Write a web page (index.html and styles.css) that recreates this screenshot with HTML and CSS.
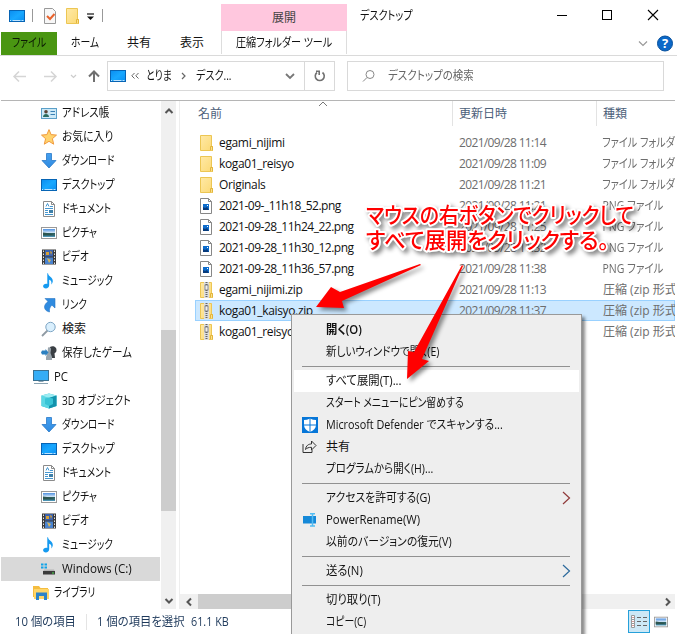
FILE: index.html
```html
<!DOCTYPE html>
<html lang="ja">
<head>
    <meta charset="UTF-8">
    <meta name="viewport" content="width=device-width, initial-scale=1.0">
    <title>デスクトップ</title>
    <link rel="stylesheet" href="styles.css">
</head>
<body>
    <svg class="defs" width="0" height="0">
        <linearGradient id="g-desk" x1="0" y1="0" x2="1" y2="1"><stop offset="0" stop-color="#0a8df0"/><stop offset="0.5" stop-color="#18a8ff"/><stop offset="1" stop-color="#0a8ff2"/></linearGradient>
        <linearGradient id="g-folder" x1="0" y1="0" x2="1" y2="1"><stop offset="0" stop-color="#ffe9a6"/><stop offset="1" stop-color="#fbd975"/></linearGradient>
        <linearGradient id="g-pic" x1="0" y1="0" x2="0" y2="1"><stop offset="0" stop-color="#4d8fe0"/><stop offset="0.5" stop-color="#dcecf8"/><stop offset="0.55" stop-color="#2d5f5c"/><stop offset="1" stop-color="#4f9bc0"/></linearGradient>
        <linearGradient id="g-blue" x1="0" y1="0" x2="0" y2="1"><stop offset="0" stop-color="#45a0f0"/><stop offset="1" stop-color="#2f8ae0"/></linearGradient>
        <symbol id="i-desktop" viewBox="0 0 16 16"><rect x="0.5" y="2.5" width="15" height="11" fill="url(#g-desk)" stroke="#0764b4"/><path d="M1 12.5h1M3.500 12.500h8M12.500 12.500h2" stroke="#bfe4ff"/></symbol>
        <symbol id="i-folder" viewBox="0 0 16 16"><path d="M1.500 0.500h11v11h1v4h-12z" fill="url(#g-folder)" stroke="#ecc653"/><path d="M11.500 15v-3.500h2v4" fill="#fbe08c" stroke="#e2b53c"/></symbol>
        <symbol id="i-contact" viewBox="0 0 16 16"><rect x="0.5" y="3.500" width="15" height="10" fill="#cde9f7" stroke="#5b9fc8"/><circle cx="5" cy="6.700" r="1.800" fill="#5c4434"/><path d="M2 12c0-4 6-4 6 0z" fill="#2c6c5e"/><path d="M9.500 6.500h4.500M9.500 9.500h4.500" stroke="#3a80b5"/></symbol>
        <symbol id="i-star" viewBox="0 0 16 16"><path d="M8 .6l2.100 5 5.400.5-4.100 3.600 1.300 5.500L8 12.300l-4.700 2.900 1.300-5.500L.5 6.100l5.400-.5z" fill="#ffd36e" stroke="#f09a3e"/></symbol>
        <symbol id="i-down" viewBox="0 0 16 16"><path d="M5.500.5h5v7h4.500L8 15 1 7.500h4.500z" fill="url(#g-blue)" stroke="#2878c8" stroke-width=".8"/></symbol>
        <symbol id="i-doc" viewBox="0 0 16 16"><path d="M2.500.5h8l3 3v12h-11z" fill="#fff" stroke="#8b8b8b"/><path d="M10.500.5v3h3" fill="none" stroke="#8b8b8b"/><path d="M5 5.500l1.500-3L8 5.500M4 7.500h8M4 9.500h3M4 11.500h3M4 13.500h8M9 5.500h3" fill="none" stroke="#4596cf"/><rect x="8" y="9" width="4" height="3" fill="#3e7fa8"/></symbol>
        <symbol id="i-pic" viewBox="0 0 16 16"><rect x="0.5" y="2.500" width="15" height="11" fill="#fff" stroke="#999"/><rect x="2" y="4" width="12" height="8" fill="url(#g-pic)"/><path d="M2 7.500l4 .5 8 2v.5H2z" fill="#2d5550"/></symbol>
        <symbol id="i-video" viewBox="0 0 16 16"><rect x="1" y="0.500" width="14" height="15" fill="#3b3b3b"/><rect x="4" y="1" width="8" height="6.500" fill="#3b62ad"/><rect x="4" y="8.500" width="8" height="6.500" fill="#4a83cf"/><path d="M5 3h3v3H5zM9 2l2 1-1 3" fill="#d6a138"/><path d="M6 9l4 2-2 3" fill="#d8b657"/><path d="M2.500 1.500v14M13.500 1.500v14" stroke="#e5e5e5" stroke-dasharray="1.500 1.500"/></symbol>
        <symbol id="i-music" viewBox="0 0 16 16"><path d="M7 .3c.5 3.500 5 3.800 4.800 8-.1 1.600-1 2.700-1.600 3.300.9-2.900-.5-4.200-2-4.800v5.500c0 2-1.600 3.100-3.400 3.100-1.600 0-2.700-.9-2.700-2.100 0-1.700 2-2.900 4.200-2.300V.3z" fill="#159af0"/></symbol>
        <symbol id="i-link" viewBox="0 0 16 16"><path d="M4 1.500h10v9.500l-3-2.800C9 9.800 8 12 8.500 15c-3-.5-5-2.500-5-5 0-2 1.500-4 3.500-5.500z" fill="#2f8be0" stroke="#2675c4" stroke-width=".6"/></symbol>
        <symbol id="i-find" viewBox="0 0 16 16"><path d="M1 15l5.500-5.500" stroke="#8f9aa3" stroke-width="1.800"/><circle cx="9.500" cy="6" r="4.700" fill="#d9effd" stroke="#7da5c4"/></symbol>
        <symbol id="i-game" viewBox="0 0 16 16"><path d="M9 2c3-2 7 0 6.500 3.500-.2 2-1.500 2.500-2 3L14 13H8z" fill="#3a3f44"/><path d="M7 2.500a2 2 0 0 1 3 2L9.500 8l1.500 4v3H5v-3l1.500-4z" fill="#9aa5ad"/><path d="M1 5.500h3.500V4l3 3.500-3 3.500V9.500H1L0 7.500z" fill="#2c80c0"/></symbol>
        <symbol id="i-pc" viewBox="0 0 16 16"><rect x="0.5" y="1.500" width="15" height="10" fill="#35adf5" stroke="#3a7090"/><path d="M5.500 12.500h5M1 14.500h14" stroke="#8aa3b2"/></symbol>
        <symbol id="i-3d" viewBox="0 0 16 16"><path d="M8 .5l7.500 2v10.500L8 15.500.5 13V2.500z" fill="#2bb9cf"/><path d="M.5 2.500L8 5v10.500L.5 13z" fill="#5bd7e4"/><path d="M.5 2.500L8 .5l7.500 2L8 5z" fill="#9cecf2"/><path d="M8 5l7.500-2.500V13L8 15.500z" fill="#1392ac"/><path d="M4 5.500l4-1 4 1v5.500l-4 2-4-2z" fill="#38c4d6"/></symbol>
        <symbol id="i-drive" viewBox="0 0 16 16"><path d="M0 2.500h2.500v2H0zM3.500 2.500H6v2H3.500zM0 5.500h2.500v2H0zM3.500 5.500H6v2H3.500z" fill="#12a3e8"/><path d="M3 8.500h10l1 2H2z" fill="#b5b5b5"/><rect x="2" y="10" width="12" height="3.500" fill="#3b3b3b"/><path d="M11 12h2" stroke="#4ae04a"/></symbol>
        <symbol id="i-lib" viewBox="0 0 16 16"><path d="M0 1h6l1.500 2H15v9H0z" fill="#f5bd3f"/><path d="M1 4h15v10H1z" fill="#ffd669"/><path d="M3 7.500h11V15h-3v-4H6v4H3z" fill="#2c83c9"/></symbol>
        <symbol id="i-png" viewBox="0 0 16 16"><path d="M1.500.5h8l3 3v12h-11z" fill="#fff" stroke="#878787"/><path d="M9.500.5v3h3" fill="none" stroke="#878787"/><rect x="4" y="6" width="6" height="6" fill="#0d6ccc"/><path d="M4 12V9l2 1 2-1 2 3z" fill="#083b7c"/><path d="M8 7h1v1H8z" fill="#fff"/></symbol>
        <symbol id="i-zip" viewBox="0 0 16 16"><path d="M1.500.5h11v11h1v4h-12z" fill="url(#g-folder)" stroke="#ecc653"/><path d="M11.500 15v-3.500h2v4" fill="#fbe08c" stroke="#e2b53c"/><rect x="5" y="0" width="5" height="16" fill="#dedede"/><path d="M7.500 0v16" stroke="#666" stroke-width="2" stroke-dasharray="1 1"/><rect x="6" y="3" width="3" height="5" fill="#eee" stroke="#666" stroke-width=".7"/></symbol>
        <symbol id="i-shield" viewBox="0 0 16 16"><path d="M0 0h16v16H0z" fill="#0676d8"/><path d="M8 1.500c2 1 4 1.500 6 1.500v5c0 3.200-2.500 5.500-6 7C4.500 13.500 2 11.200 2 8V3c2 0 4-.5 6-1.500z" fill="#fff"/><path d="M8 1v14M1.500 8h13" stroke="#0676d8"/></symbol>
        <symbol id="i-share" viewBox="0 0 16 16"><path d="M2.500 5v8.500h9V11" fill="none" stroke="#333" transform="translate(-1.500)"/><path d="M3.500 10.500c.5-4 3-5.500 6-5.500V2L14 6.500 9.500 11V8.300c-3 0-4.500.7-6 2.200z" fill="none" stroke="#333"/></symbol>
        <symbol id="i-rename" viewBox="0 0 16 16"><path d="M1 4h13v7.500H1z" fill="#1689d8"/><path d="M10.500 2v12M8 1.800h5M8 14h5" stroke="#53bdf2" stroke-width="1.500"/></symbol>
    </svg>

    <div class="window">
        <div class="ribbon">
            <div class="quick">
                <svg class="icon"><use href="#i-desktop"/></svg>
                <i class="bar"></i>
                <svg class="icon check" viewBox="0 0 16 16"><path d="M2.500.5h8l3 3v12h-11z" fill="#f7f7f7" stroke="#999"/><path d="M5 8l3 3 4.500-5" fill="none" stroke="#e8622c" stroke-width="2"/></svg>
                <svg class="icon qfolder"><use href="#i-folder"/></svg>
                <svg class="caret" width="8" height="8" viewBox="0 0 8 8"><path d="M0 1h7" stroke="#111" stroke-width="1.200"/><path d="M0 3.500h7L3.500 7z" fill="#111"/></svg>
                <i class="bar bar-end"></i>
            </div>
            <div class="tabs">
                <span class="tab file"><span class="t s82">ファイル</span></span>
                <span class="tab home"><span class="t s82">ホーム</span></span>
                <span class="tab share"><span class="t">共有</span></span>
                <span class="tab view"><span class="t">表示</span></span>
            </div>
            <div class="context">
                <div class="context-head">展開</div>
                <div class="context-tab"><span class="t s84">圧縮フォルダー ツール</span></div>
            </div>
            <div class="caption">
                <span class="t s84 caption-text">デスクトップ</span>
                <svg class="wbtns" width="104" height="14" viewBox="0 0 104 14"><path d="M1 7.500h10" stroke="#000"/><rect x="46.500" y="2.500" width="9" height="9" fill="none" stroke="#000"/><path d="M92 2l10 10M102 2L92 12" stroke="#000" stroke-width="1.100"/></svg>
                <svg class="help" width="36" height="17" viewBox="0 0 36 17"><path d="M2 6.500l4 4 4-4" fill="none" stroke="#999" stroke-width="1.200"/><circle cx="28" cy="8.500" r="7.500" fill="#0b68c8" stroke="#07509c"/><text x="28" y="13" class="q">?</text></svg>
            </div>
        </div>

        <div class="nav">
            <svg class="arrows" width="104" height="30" viewBox="0 0 104 30" fill="none"><path d="M14 15.500h12M19 10.500l-5 5 5 5M44 15.500h12M51 10.500l5 5-5 5" stroke="#d5d5d5" stroke-width="1.500"/><path d="M71 14l2.500 2.500L76 14" stroke="#ccc" stroke-width="1.200"/><path d="M94 21V11M89 15.500l5-5 5 5" stroke="#707070" stroke-width="2"/></svg>
            <div class="address">
                <svg class="icon"><use href="#i-desktop"/></svg>
                <svg class="laquo" width="8" height="8" viewBox="0 0 8 8" fill="none" stroke="#666"><path d="M3.500 1L.8 3.800l2.700 2.700M7.500 1L4.800 3.800l2.700 2.700"/></svg>
                <span class="t s82 crumb1">とりま</span>
                <svg class="raquo" width="6" height="8" viewBox="0 0 6 8" fill="none" stroke="#666" stroke-width="1.200"><path d="M1 1l3 3-3 3"/></svg>
                <span class="t s84 crumb2">デスク...</span>
                <svg class="drop" width="10" height="8" viewBox="0 0 10 8" fill="none" stroke="#777" stroke-width="1.800"><path d="M1 2l4 4 4-4"/></svg>
                <span class="reload"><svg width="14" height="14" viewBox="0 0 14 14" fill="none" stroke="#707070" stroke-width="1.600"><path d="M9.500 3.500A4.500 4.500 0 1 1 4 3.500M3 2.200h3.200V6"/></svg></span>
            </div>
            <div class="search">
                <svg width="14" height="14" viewBox="0 0 14 14" fill="none" stroke="#888"><circle cx="8" cy="5.500" r="4"/><path d="M5 8.500L1 12.500"/></svg>
                <span class="t s87">デスクトップの検索</span>
            </div>
        </div>

        <div class="main">
            <div class="tree">
                <div class="node"><svg class="icon"><use href="#i-contact"/></svg><span class="t s87">アドレス帳</span></div>
                <div class="node"><svg class="icon"><use href="#i-star"/></svg><span class="t s90">お気に入り</span></div>
                <div class="node"><svg class="icon"><use href="#i-down"/></svg><span class="t s80">ダウンロード</span></div>
                <div class="node"><svg class="icon"><use href="#i-desktop"/></svg><span class="t s84">デスクトップ</span></div>
                <div class="node"><svg class="icon"><use href="#i-doc"/></svg><span class="t s80">ドキュメント</span></div>
                <div class="node"><svg class="icon"><use href="#i-pic"/></svg><span class="t s82">ピクチャ</span></div>
                <div class="node"><svg class="icon"><use href="#i-video"/></svg><span class="t s80">ビデオ</span></div>
                <div class="node"><svg class="icon"><use href="#i-music"/></svg><span class="t s80">ミュージック</span></div>
                <div class="node"><svg class="icon"><use href="#i-link"/></svg><span class="t s80">リンク</span></div>
                <div class="node"><svg class="icon"><use href="#i-find"/></svg><span class="t">検索</span></div>
                <div class="node"><svg class="icon"><use href="#i-game"/></svg><span class="t s87">保存したゲーム</span></div>
                <div class="node root"><svg class="icon"><use href="#i-pc"/></svg><span class="t s94">PC</span></div>
                <div class="node"><svg class="icon"><use href="#i-3d"/></svg><span class="t s84">3D オブジェクト</span></div>
                <div class="node"><svg class="icon"><use href="#i-down"/></svg><span class="t s80">ダウンロード</span></div>
                <div class="node"><svg class="icon"><use href="#i-desktop"/></svg><span class="t s84">デスクトップ</span></div>
                <div class="node"><svg class="icon"><use href="#i-doc"/></svg><span class="t s80">ドキュメント</span></div>
                <div class="node"><svg class="icon"><use href="#i-pic"/></svg><span class="t s82">ピクチャ</span></div>
                <div class="node"><svg class="icon"><use href="#i-video"/></svg><span class="t s80">ビデオ</span></div>
                <div class="node"><svg class="icon"><use href="#i-music"/></svg><span class="t s80">ミュージック</span></div>
                <div class="node current"><svg class="icon"><use href="#i-drive"/></svg><span class="t s97">Windows (C:)</span></div>
                <div class="node root"><svg class="icon"><use href="#i-lib"/></svg><span class="t s80">ライブラリ</span></div>
            </div>
            <div class="vscroll">
                <svg width="10" height="8" viewBox="0 0 10 8" fill="none" stroke="#555" stroke-width="2"><path d="M1.500 6L5 2.500 8.500 6"/></svg>
                <div class="vthumb"></div>
                <svg width="10" height="8" viewBox="0 0 10 8" fill="none" stroke="#555" stroke-width="2"><path d="M1.500 2L5 5.500 8.500 2"/></svg>
            </div>
            <div class="list">
                <div class="head">
                    <span class="h-name">名前</span>
                    <svg class="sort" width="10" height="6" viewBox="0 0 10 6" fill="none" stroke="#777"><path d="M1 5l4-4 4 4"/></svg>
                    <span class="h-date">更新日時</span>
                    <span class="h-type">種類</span>
                </div>
                <div class="rows">
                    <div class="row"><svg class="icon"><use href="#i-folder"/></svg><span class="name">egami_nijimi</span><span class="date">2021/09/28 11:14</span><span class="t type s84">ファイル フォルダー</span></div>
                    <div class="row"><svg class="icon"><use href="#i-folder"/></svg><span class="name">koga01_reisyo</span><span class="date">2021/09/28 11:09</span><span class="t type s84">ファイル フォルダー</span></div>
                    <div class="row"><svg class="icon"><use href="#i-folder"/></svg><span class="name">Originals</span><span class="date">2021/09/28 11:21</span><span class="t type s84">ファイル フォルダー</span></div>
                    <div class="row"><svg class="icon"><use href="#i-png"/></svg><span class="name shot">2021-09-_11h18_52.png</span><span class="date">2021/09/28 11:21</span><span class="t type s87">PNG ファイル</span></div>
                    <div class="row"><svg class="icon"><use href="#i-png"/></svg><span class="name shot">2021-09-28_11h24_22.png</span><span class="date">2021/09/28 11:25</span><span class="t type s87">PNG ファイル</span></div>
                    <div class="row"><svg class="icon"><use href="#i-png"/></svg><span class="name shot">2021-09-28_11h30_12.png</span><span class="date">2021/09/28 11:32</span><span class="t type s87">PNG ファイル</span></div>
                    <div class="row"><svg class="icon"><use href="#i-png"/></svg><span class="name shot">2021-09-28_11h36_57.png</span><span class="date">2021/09/28 11:38</span><span class="t type s87">PNG ファイル</span></div>
                    <div class="row"><svg class="icon"><use href="#i-zip"/></svg><span class="name">egami_nijimi.zip</span><span class="date">2021/09/28 11:13</span><span class="t type">圧縮 (zip 形式)</span></div>
                    <div class="row selected"><svg class="icon"><use href="#i-zip"/></svg><span class="name">koga01_kaisyo.zip</span><span class="date">2021/09/28 11:37</span><span class="t type">圧縮 (zip 形式)</span></div>
                    <div class="row"><svg class="icon"><use href="#i-zip"/></svg><span class="name">koga01_reisyo.zip</span><span class="date">2021/09/28 11:38</span><span class="t type">圧縮 (zip 形式)</span></div>
                </div>
                <div class="hscroll">
                    <svg width="8" height="10" viewBox="0 0 8 10" fill="none" stroke="#555" stroke-width="2"><path d="M6 1.500L2.500 5 6 8.500"/></svg>
                    <div class="hthumb"></div>
                    <svg width="8" height="10" viewBox="0 0 8 10" fill="none" stroke="#555" stroke-width="2"><path d="M2 1.500L5.500 5 2 8.500"/></svg>
                </div>
            </div>
        </div>

        <div class="status">
            <span class="count"><span class="t s94">10 個の項目</span></span>
            <span class="picked"><span class="t s94">1 個の項目を選択</span></span>
            <span class="t s90">61.1 KB</span>
            <span class="views">
                <span class="view-on"><svg width="16" height="14" viewBox="0 0 16 14" fill="none"><path d="M.5.500h3v4h-3zM.5 4.500h3v4h-3zM.5 8.500h3v4h-3z" fill="#fff" stroke="#999"/><path d="M2 2v1M2 6v1M2 10v1" stroke="#a33"/><path d="M6 2.500h10M6 6.500h10M6 10.500h10" stroke="#666" stroke-dasharray="4 2"/></svg></span>
                <svg class="icon small"><use href="#i-pic"/></svg>
            </span>
        </div>
    </div>

    <div class="menu">
        <div class="item bold"><span class="t s94">開く(O)</span></div>
        <div class="item"><span class="t s87">新しいウィンドウで開く(E)</span></div>
        <hr>
        <div class="item hover"><span class="t s94">すべて展開(T)...</span></div>
        <div class="item"><span class="t s82">スタート メニューにピン留めする</span></div>
        <div class="item"><svg class="icon"><use href="#i-shield"/></svg><span class="t s90">Microsoft Defender でスキャンする...</span></div>
        <div class="item"><svg class="icon"><use href="#i-share"/></svg><span class="t">共有</span></div>
        <div class="item"><span class="t s87">プログラムから開く(H)...</span></div>
        <hr>
        <div class="item"><span class="t s90">アクセスを許可する(G)</span><svg class="sub" width="9" height="14" viewBox="0 0 9 14"><path d="M1 1l6.500 6L1 13" fill="none" stroke="#903a3a" stroke-width="1.200"/></svg></div>
        <div class="item"><svg class="icon"><use href="#i-rename"/></svg><span class="t s94">PowerRename(W)</span></div>
        <div class="item"><span class="t s90">以前のバージョンの復元(V)</span></div>
        <hr>
        <div class="item"><span class="t s94">送る(N)</span><svg class="sub" width="9" height="14" viewBox="0 0 9 14"><path d="M1 1l6.500 6L1 13" fill="none" stroke="#2d6a9c" stroke-width="1.200"/></svg></div>
        <hr>
        <div class="item"><span class="t s94">切り取り(T)</span></div>
        <div class="item"><span class="t s82">コピー(C)</span></div>
    </div>

    <svg class="callout" width="677" height="634" viewBox="0 0 677 634">
        <text x="366" y="223" textLength="268" lengthAdjust="spacingAndGlyphs">マウスの右ボタンでクリックして</text>
        <text x="366" y="248" textLength="243" lengthAdjust="spacingAndGlyphs">すべて展開をクリックする。</text>
        <path d="M420 264L340 292L331 287L316 307L344 308L342 301L421 265z"/>
        <path d="M462 265L414 352L408 351L407 379L429 361L422 359L463 266z"/>
    </svg>
</body>
</html>
```
FILE: styles.css
```css
* {
    box-sizing: border-box;
}
body {
    margin: 0;
    width: 677px;
    height: 634px;
    overflow: hidden;
    background: #fff;
    color: #111;
    font-family: "Open Sans", "Noto Sans CJK JP", sans-serif;
    font-size: 12px;
    line-height: 16px;
}
.defs {
    position: absolute;
}
svg {
    flex: none;
    display: block;
}
.icon {
    width: 16px;
    height: 16px;
}

/* condensed labels */
.t {
    display: inline-block;
    white-space: nowrap;
    transform-origin: 0 50%;
    font-feature-settings: "palt";
}
.s80 {
    transform: scaleX(.8);
}
.s82 {
    transform: scaleX(.82);
}
.s84 {
    transform: scaleX(.84);
}
.s87 {
    transform: scaleX(.875);
}
.s90 {
    transform: scaleX(.9);
}
.s94 {
    transform: scaleX(.945);
}
.s97 {
    transform: scaleX(.97);
}
.window {
    display: flex;
    flex-direction: column;
    height: 634px;
}

/* ribbon */
.ribbon {
    display: grid;
    grid-template-columns: 221px 126px 1fr;
    grid-template-rows: 31px 24px;
    height: 56px;
    border-bottom: 1px solid #dadada;
}
.quick {
    display: flex;
    align-items: center;
    padding-left: 9px;
}
.bar {
    width: 1px;
    height: 13px;
    margin-left: 7px;
    background: #999;
}
.check {
    margin-left: 9px;
}
.qfolder {
    margin-left: 7px;
}
.caret {
    margin: 3px 0 0 6px;
}
.tabs {
    grid-row: 2;
    display: flex;
    align-items: center;
}
.tab {
    display: flex;
    align-items: center;
    height: 23px;
}
.file {
    width: 56px;
    margin-left: 1px;
    padding-left: 11px;
    background: #4a9612;
    color: #0b1a04;
}
.home {
    width: 70px;
    padding-left: 14px;
}
.share {
    width: 53px;
}
.context {
    grid-column: 2;
    grid-row: 1 / 3;
}
.context-head {
    height: 27px;
    margin-top: 4px;
    padding-top: 6px;
    background: #ffc7de;
    color: #444;
    text-align: center;
}
.context-tab {
    height: 23px;
    padding: 4px 0 0 14px;
    border-left: 1px solid #ddd;
    border-right: 1px solid #ddd;
}
.caption {
    grid-row: 1 / 3;
    grid-column: 3;
    display: grid;
    grid-template-columns: 1fr 104px 17px;
    grid-template-rows: 31px 24px;
    align-items: center;
    padding-left: 13px;
}
.wbtns {
    margin-bottom: 1px;
}
.help {
    grid-row: 2;
    grid-column: 2 / 4;
    justify-self: end;
    margin-right: 4px;
}
.q {
    fill: #fff;
    font-size: 13px;
    font-weight: 700;
    text-anchor: middle;
}

/* address row */
.nav {
    display: flex;
    align-items: center;
    height: 40px;
}
.address {
    display: flex;
    align-items: center;
    width: 228px;
    height: 30px;
    margin-left: 3px;
    padding-left: 2px;
    border: 1px solid #d9d9d9;
}
.laquo {
    margin-left: 5px;
}
.crumb1 {
    width: 28px;
    margin-left: 7px;
}
.raquo {
    margin-left: 7px;
}
.crumb2 {
    width: 38px;
    margin-left: 9px;
}
.drop {
    margin-left: auto;
}
.reload {
    display: flex;
    align-items: center;
    justify-content: center;
    width: 30px;
    height: 28px;
    margin-left: 9px;
    border-left: 1px solid #d9d9d9;
}
.search {
    display: flex;
    align-items: center;
    gap: 12px;
    width: 317px;
    height: 30px;
    margin-left: 12px;
    padding-left: 14px;
    border: 1px solid #d9d9d9;
    color: #666;
}

/* panes */
.main {
    display: flex;
    height: 509px;
    margin: 4px 2px 0 1px;
    border-top: 1px solid #b5b5b5;
}
.tree {
    width: 160px;
    overflow: hidden;
}
.node {
    display: flex;
    align-items: center;
    gap: 5px;
    height: 24px;
    padding-left: 40px;
}
.node.root {
    padding-left: 32px;
}
.node.current {
    margin-right: 1px;
    background: #d9d9d9;
}
.vscroll {
    display: flex;
    flex-direction: column;
    align-items: center;
    width: 15px;
    padding: 6px 0 4px;
    background: #f0f0f0;
}
.vthumb {
    width: 15px;
    height: 181px;
    margin: 215px 0 auto;
    background: #cdcdcd;
}
.list {
    display: flex;
    flex-direction: column;
    flex: 1;
    min-width: 0;
    margin-left: 3px;
    border-left: 1px solid #eee;
    overflow: hidden;
}
.head {
    display: grid;
    grid-template-columns: 121px 133px 144px 1fr;
    height: 25px;
    padding-left: 18px;
    color: #4c607a;
}
.head span {
    padding-top: 5px;
}
.h-date,
.h-type {
    padding-left: 6px;
    border-left: 1px solid #e3e3e3;
}
.sort {
    margin-left: -1px;
}
.rows {
    flex: 1;
    margin-top: 6px;
}
.row {
    display: grid;
    grid-template-columns: 16px 240px 144px 1fr;
    align-items: center;
    height: 21px;
    margin-left: 15px;
    padding-left: 4px;
}
.row.selected {
    background: #cce8ff;
    box-shadow: inset 0 0 0 1px #99d1ff;
}
.name {
    padding-left: 4px;
    letter-spacing: -.35px;
}
.name.shot {
    letter-spacing: -.5px;
}
.date,
.type {
    color: #6d6d6d;
}
.date {
    padding-left: 4px;
    letter-spacing: -.65px;
}
.type {
    padding-left: 4px;
}
.hscroll {
    display: flex;
    align-items: center;
    height: 15px;
    padding: 0 3px 0 5px;
    background: #f0f0f0;
}
.hthumb {
    width: 340px;
    height: 15px;
    margin: 0 auto 0 5px;
    background: #cdcdcd;
}

/* status bar */
.status {
    display: flex;
    align-items: center;
    height: 25px;
    padding-left: 15px;
    color: #1e395b;
}
.count {
    width: 72px;
    border-right: 1px solid #e4e4e4;
}
.picked {
    width: 94px;
    margin-left: 10px;
}
.views {
    display: flex;
    align-items: center;
    gap: 4px;
    margin: 0 9px 0 auto;
}
.view-on {
    display: flex;
    align-items: center;
    justify-content: center;
    width: 22px;
    height: 23px;
    background: #cce8f6;
    border: 1px solid #26a0da;
}
.small {
    width: 14px;
}

/* context menu */
.menu {
    position: absolute;
    left: 291px;
    top: 314px;
    width: 291px;
    height: 330px;
    padding: 4px 2px;
    background: #eee;
    border: 1px solid #999;
    box-shadow: 3px 3px 3px rgba(0,0,0,0.45);
}
.item {
    display: flex;
    align-items: center;
    height: 22px;
    padding-left: 32px;
}
.item.hover {
    background: #fff;
}
.item.bold {
    font-weight: 600;
}
.item .icon {
    margin: 0 8px 0 -24px;
}
.sub {
    margin: 0 8px 0 auto;
}
.menu hr {
    height: 1px;
    margin: 3px 9px 3px 8px;
    border: 0;
    background: #919191;
}

/* red notes over the window */
.callout {
    position: absolute;
    left: 0;
    top: 0;
    filter: drop-shadow(3px 3px 2px rgba(0,0,0,0.45));
}
.callout text {
    fill: #f00;
    stroke: #fff;
    stroke-width: 4px;
    stroke-linejoin: round;
    paint-order: stroke;
    font-size: 22px;
    font-weight: 500;
    font-feature-settings: "palt";
}
.callout path {
    fill: #f00;
}
```
